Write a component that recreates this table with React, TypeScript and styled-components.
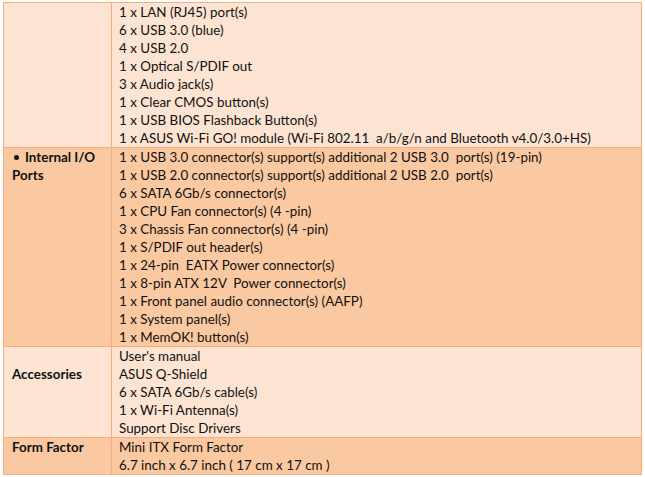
import styled, { createGlobalStyle } from "styled-components";

interface Spec {
    label?: string;
    bullet?: boolean;
    labelOffset?: number;
    tone: "light" | "dark";
    items: string[];
}

const specs: Spec[] = [
    {
        tone: "light",
        items: [
            "1 x LAN (RJ45) port(s)",
            "6 x USB 3.0 (blue)",
            "4 x USB 2.0",
            "1 x Optical S/PDIF out",
            "3 x Audio jack(s)",
            "1 x Clear CMOS button(s)",
            "1 x USB BIOS Flashback Button(s)",
            "1 x ASUS Wi-Fi GO! module (Wi-Fi 802.11  a/b/g/n and Bluetooth v4.0/3.0+HS)",
        ],
    },
    {
        label: "Internal I/O Ports",
        bullet: true,
        tone: "dark",
        items: [
            "1 x USB 3.0 connector(s) support(s) additional 2 USB 3.0  port(s) (19-pin)",
            "1 x USB 2.0 connector(s) support(s) additional 2 USB 2.0  port(s)",
            "6 x SATA 6Gb/s connector(s)",
            "1 x CPU Fan connector(s) (4 -pin)",
            "3 x Chassis Fan connector(s) (4 -pin)",
            "1 x S/PDIF out header(s)",
            "1 x 24-pin  EATX Power connector(s)",
            "1 x 8-pin ATX 12V  Power connector(s)",
            "1 x Front panel audio connector(s) (AAFP)",
            "1 x System panel(s)",
            "1 x MemOK! button(s)",
        ],
    },
    {
        label: "Accessories",
        labelOffset: 18,
        tone: "light",
        items: [
            "User's manual",
            "ASUS Q-Shield",
            "6 x SATA 6Gb/s cable(s)",
            "1 x Wi-Fi Antenna(s)",
            "Support Disc Drivers",
        ],
    },
    {
        label: "Form Factor",
        tone: "dark",
        items: ["Mini ITX Form Factor", "6.7 inch x 6.7 inch ( 17 cm x 17 cm )"],
    },
];

const GlobalStyle = createGlobalStyle`
    body {
        margin: 0;
        background: #ffffff;
        font-family: Lato, "Open Sans", sans-serif;
    }
`;

function App() {
    return (
        <>
            <GlobalStyle />
            <SpecTable>
                {specs.map((spec, i) => (
                    <Row key={i} $tone={spec.tone}>
                        <Label $offset={spec.labelOffset ?? 0}>
                            {spec.bullet && <Bullet />}
                            {spec.label}
                        </Label>
                        <Values>
                            {spec.items.map((item) => (
                                <Line key={item}>{item}</Line>
                            ))}
                        </Values>
                    </Row>
                ))}
            </SpecTable>
        </>
    );
}

const SpecTable = styled.div`
    margin: 2px 0 0 3px;
    width: 639px;
    border: 1px solid #f4ae7c;
    box-sizing: border-box;
    color: #101010;
    font-size: 13.4px;
    line-height: 18px;
`;

const Row = styled.div<{ $tone: "light" | "dark" }>`
    display: grid;
    grid-template-columns: 108px 1fr;
    background: ${({ $tone }) => ($tone === "light" ? "#fde4d2" : "#fbc9a1")};

    & + & {
        border-top: 1px solid #f4ae7c;
    }
`;

const Label = styled.div<{ $offset: number }>`
    border-right: 1px solid #f4ae7c;
    padding: ${({ $offset }) => $offset}px 4px 0 8px;
    font-weight: 700;
`;

const Bullet = styled.span`
    display: inline-block;
    width: 5px;
    height: 5px;
    border-radius: 50%;
    background: #101010;
    margin: 0 6px 2px 2px;
    vertical-align: middle;
`;

const Values = styled.div`
    padding-left: 7px;
`;

const Line = styled.div`
    white-space: pre;
`;

export default App;
